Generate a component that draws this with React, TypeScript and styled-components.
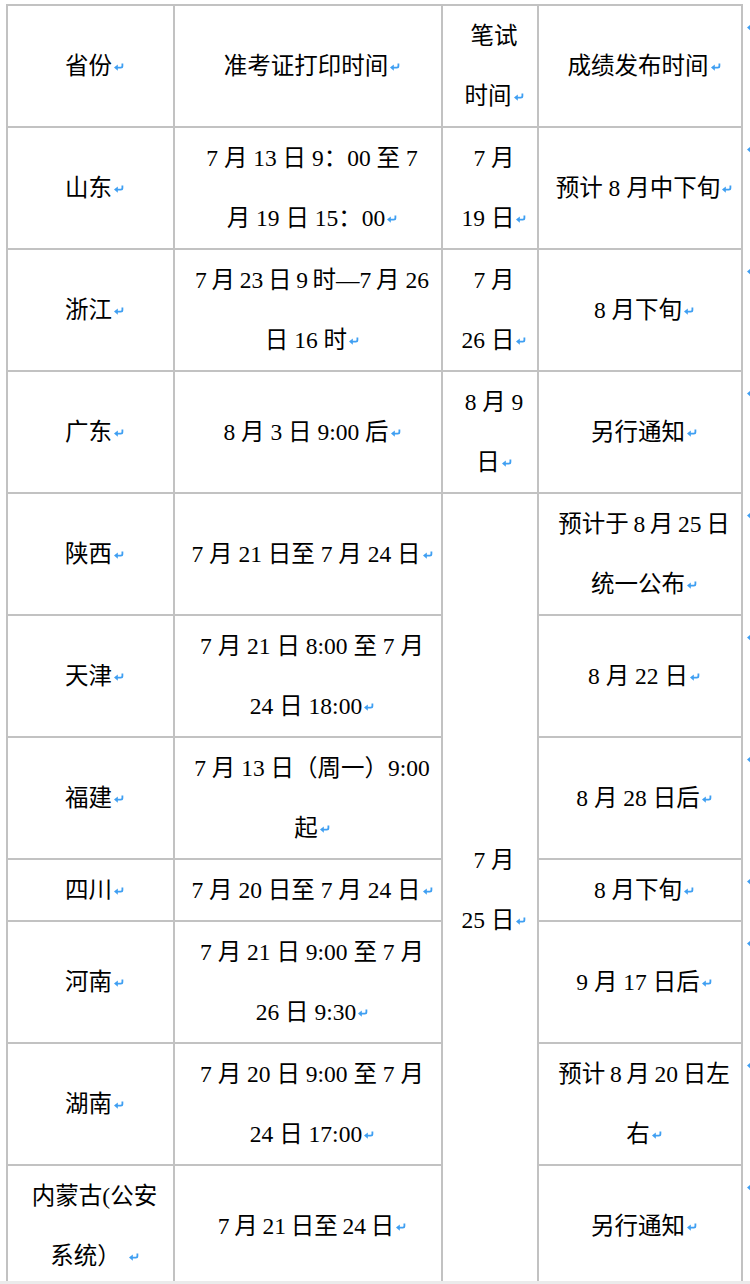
import * as React from 'react';
import styled, { createGlobalStyle } from 'styled-components';

const GlobalStyle = createGlobalStyle`
  html, body {
    margin: 0;
    padding: 0;
    background: #ffffff;
  }
  body {
    font-family: "Liberation Serif", "Noto Sans CJK SC", serif;
    color: #000000;
  }
`;

const LINE = '#c2c2c2';
const MARK = '#3f9ff2';

const Frame = styled.div`
  height: 1281px;
  overflow: hidden;
  display: flex;
  align-items: flex-start;
  padding: 4px 0 0 6px;
  box-sizing: border-box;
`;

const Footer = styled.div`
  height: 3px;
  background: #ebebeb;
`;

const Grid = styled.div`
  display: grid;
  grid-template-columns: 165px 266px 94px 202px;
  grid-template-rows: repeat(7, 120px) 60px repeat(3, 120px);
  gap: 2px;
  padding: 2px;
  background: ${LINE};
  flex-shrink: 0;
`;

const Cell = styled.div<{ $span?: number }>`
  grid-row: ${(p) => (p.$span ? `span ${p.$span}` : 'auto')};
  background: #ffffff;
  display: flex;
  align-items: center;
  justify-content: center;
  padding-left: 8px;
  text-align: center;
  font-size: 23.5px;
  line-height: 60px;
  white-space: nowrap;
`;

const Lines = styled.div`
  display: flex;
  flex-direction: column;
  align-items: center;
`;

const RowMarks = styled.div`
  display: flex;
  flex-direction: column;
  padding-top: 2px;
  margin-left: 2px;
`;

const RowMark = styled.div<{ $h: number }>`
  height: ${(p) => p.$h}px;
  padding-top: 12px;
  box-sizing: border-box;
`;

const MarkSvg = styled.svg`
  vertical-align: middle;
  margin-left: 2px;
  margin-top: -3px;
`;

function Mark() {
  return (
    <MarkSvg width="10" height="8" viewBox="0 0 10 8">
      <path d="M8.4 0.4 V3 Q8.4 4.6 6.8 4.6 H3" stroke={MARK} strokeWidth="1.8" fill="none" />
      <path d="M0 4.6 L3.8 1.4 V7.8 Z" fill={MARK} />
    </MarkSvg>
  );
}

interface CellData {
  lines: string[];
  span?: number;
}

function TextCell({ lines, span }: CellData) {
  return (
    <Cell $span={span}>
      <Lines>
        {lines.map((l, i) => (
          <span key={i}>
            {l}
            {i === lines.length - 1 && <Mark />}
          </span>
        ))}
      </Lines>
    </Cell>
  );
}

// thin space, stands in for the gap Word puts between Chinese and Latin text
const t = '\u2009';

const cells: CellData[] = [
  { lines: ['省份'] },
  { lines: ['准考证打印时间'] },
  { lines: ['笔试', '时间'] },
  { lines: ['成绩发布时间'] },

  { lines: ['山东'] },
  { lines: ['7 月 13 日 9：00 至 7', '月 19 日 15：00'] },
  { lines: ['7 月', '19 日'] },
  { lines: ['预计 8 月中下旬'] },

  { lines: ['浙江'] },
  { lines: [`7${t}月${t}23${t}日${t}9${t}时—7${t}月 26`, '日 16 时'] },
  { lines: ['7 月', '26 日'] },
  { lines: ['8 月下旬'] },

  { lines: ['广东'] },
  { lines: ['8 月 3 日 9:00 后'] },
  { lines: ['8 月 9', '日'] },
  { lines: ['另行通知'] },

  { lines: ['陕西'] },
  { lines: ['7 月 21 日至 7 月 24 日'] },
  { lines: ['7 月', '25 日'], span: 7 },
  { lines: [`预计于${t}8${t}月${t}25${t}日`, '统一公布'] },

  { lines: ['天津'] },
  { lines: ['7 月 21 日 8:00 至 7 月', '24 日 18:00'] },
  { lines: ['8 月 22 日'] },

  { lines: ['福建'] },
  { lines: ['7 月 13 日（周一）9:00', '起'] },
  { lines: ['8 月 28 日后'] },

  { lines: ['四川'] },
  { lines: ['7 月 20 日至 7 月 24 日'] },
  { lines: ['8 月下旬'] },

  { lines: ['河南'] },
  { lines: ['7 月 21 日 9:00 至 7 月', '26 日 9:30'] },
  { lines: ['9 月 17 日后'] },

  { lines: ['湖南'] },
  { lines: ['7 月 20 日 9:00 至 7 月', '24 日 17:00'] },
  { lines: [`预计${t}8${t}月${t}20${t}日左`, '右'] },

  { lines: ['内蒙古(公安', '系统） '] },
  { lines: [`7${t}月${t}21${t}日至${t}24${t}日`] },
  { lines: ['另行通知'] },
];

const rowHeights = [122, 122, 122, 122, 122, 122, 122, 62, 122, 122, 122];

export default function App() {
  return (
    <>
      <GlobalStyle />
      <Frame>
        <Grid>
          {cells.map((c, i) => (
            <TextCell key={i} {...c} />
          ))}
        </Grid>
        <RowMarks>
          {rowHeights.map((h, i) => (
            <RowMark key={i} $h={h}>
              <Mark />
            </RowMark>
          ))}
        </RowMarks>
      </Frame>
      <Footer />
    </>
  );
}
